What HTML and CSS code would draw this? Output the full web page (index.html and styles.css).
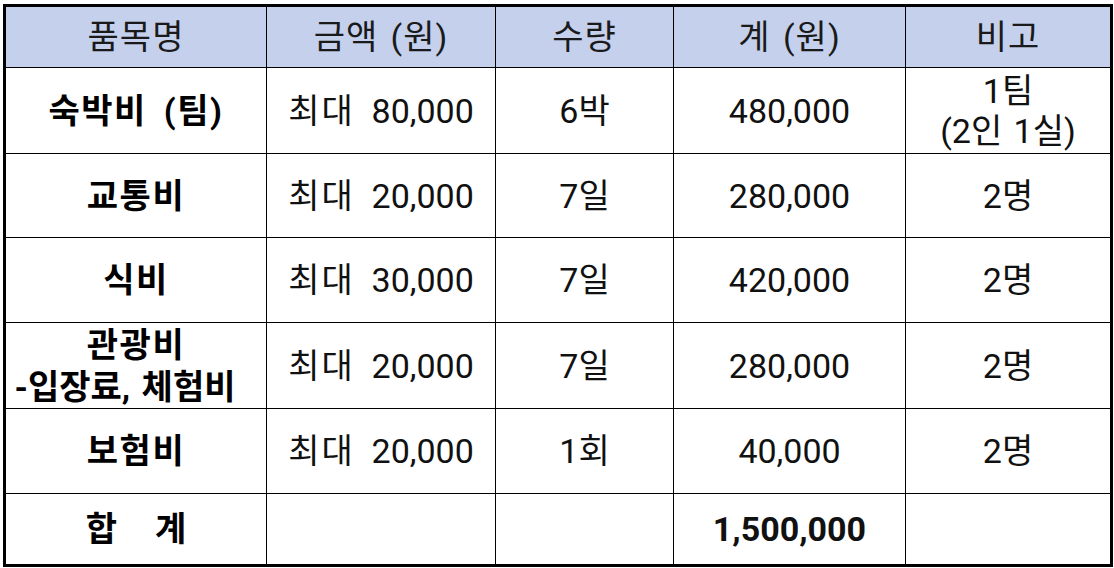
FILE: index.html
```html
<!DOCTYPE html>
<html lang="ko">
<head>
<meta charset="utf-8">
<link rel="stylesheet" href="styles.css">
</head>
<body>
<table class="budget">
  <colgroup>
    <col class="c1"><col class="c2"><col class="c3"><col class="c4"><col class="c5">
  </colgroup>
  <thead>
    <tr class="head">
      <th>품목명</th><th>금액 (원)</th><th>수량</th><th>계 (원)</th><th>비고</th>
    </tr>
  </thead>
  <tbody>
    <tr class="r1">
      <td class="item wide">숙박비 (팀)</td><td class="amt"><span class="max">최대</span>&nbsp; 80,000</td><td>6박</td><td>480,000</td><td class="two">1팀<br>(2인 1실)</td>
    </tr>
    <tr class="r2">
      <td class="item">교통비</td><td class="amt"><span class="max">최대</span>&nbsp; 20,000</td><td>7일</td><td>280,000</td><td>2명</td>
    </tr>
    <tr class="r3">
      <td class="item">식비</td><td class="amt"><span class="max">최대</span>&nbsp; 30,000</td><td>7일</td><td>420,000</td><td>2명</td>
    </tr>
    <tr class="r4">
      <td class="item two-bold">관광비<br><span class="sub">-입장료, 체험비</span></td><td class="amt"><span class="max">최대</span>&nbsp; 20,000</td><td>7일</td><td>280,000</td><td>2명</td>
    </tr>
    <tr class="r5">
      <td class="item">보험비</td><td class="amt"><span class="max">최대</span>&nbsp; 20,000</td><td>1회</td><td>40,000</td><td>2명</td>
    </tr>
    <tr class="total">
      <td class="item tot">합<span class="gap"></span>계</td><td></td><td></td><td class="sum">1,500,000</td><td></td>
    </tr>
  </tbody>
</table>
</body>
</html>
```
FILE: styles.css
```css
html, body {
  margin: 0;
  padding: 0;
  background: #ffffff;
}
body {
  padding: 4px 0 0 3px;
  font-family: Roboto, "Noto Sans CJK KR", sans-serif;
  color: #111111;
}
.budget {
  border-collapse: collapse;
  table-layout: fixed;
  width: 1107px;
  border: 3px solid #000000;
}
.c1 { width: 262px; }
.c2 { width: 229px; }
.c3 { width: 178px; }
.c4 { width: 232px; }
.c5 { width: 206px; }
.budget th,
.budget td {
  border: 1px solid #000000;
  text-align: center;
  vertical-align: middle;
  padding: 0;
  font-size: 34px;
  line-height: 40px;
  font-weight: 400;
  white-space: nowrap;
  word-spacing: 3px;
}
.head th {
  background: #c4d0ec;
  color: #1a1a1a;
  height: 60px;
  letter-spacing: 1px;
}
.r1 td { height: 85px; }
.r2 td { height: 83px; }
.r3 td { height: 84px; }
.r4 td { height: 85px; }
.r5 td { height: 84px; }
.total td { height: 70px; }
.budget td.amt {
  word-spacing: 0;
}
.max {
  letter-spacing: 2px;
}
.budget td.item {
  font-weight: 700;
  color: #000000;
  letter-spacing: 1.5px;
}
.budget td.wide {
  word-spacing: 7px;
}
.budget td.two {
  line-height: 40px;
}
.budget td.two-bold {
  line-height: 42px;
}
.sub {
  letter-spacing: 0;
  margin-right: 22px;
}
.budget td.tot {
  letter-spacing: 0;
}
.gap {
  display: inline-block;
  width: 38px;
}
.budget td.sum {
  font-weight: 700;
}
```
